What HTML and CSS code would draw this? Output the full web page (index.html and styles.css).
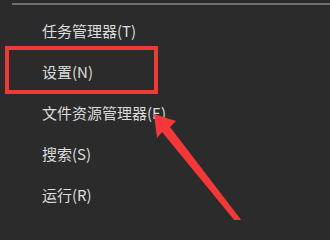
FILE: index.html
```html
<!DOCTYPE html>
<html lang="zh-CN">
<head>
<meta charset="utf-8">
<link rel="stylesheet" href="styles.css">
</head>
<body>
<div class="screen">
  <div class="sep"></div>
  <ul class="menu">
    <li class="item">任务管理器(T)</li>
    <li class="item">设置(N)</li>
    <li class="item">文件资源管理器(E)</li>
    <li class="item">搜索(S)</li>
    <li class="item">运行(R)</li>
  </ul>
  <div class="highlight"></div>
  <svg class="arrow" width="330" height="220" viewBox="0 0 330 220">
    <polygon points="154,114 176,121 170,127 242,221 235,221 162,132 157,138" fill="#f23838"/>
  </svg>
</div>
</body>
</html>
```
FILE: styles.css
```css
html, body {
  margin: 0;
  padding: 0;
  background: #2b2b2b;
}
.screen {
  position: relative;
  width: 330px;
  height: 220px;
  overflow: hidden;
  background: #2b2b2b;
  font-family: "Noto Sans CJK SC", "Noto Sans", sans-serif;
}
.sep {
  margin: 3px 0 0 12px;
  height: 2px;
  background: #6e6e6e;
}
.menu {
  list-style: none;
  margin: 0;
  padding: 5px 0 0 0;
}
.item {
  height: 41px;
  line-height: 41px;
  padding-left: 42px;
  font-size: 15px;
  color: #dcdcdc;
  white-space: nowrap;
}
.highlight {
  position: absolute;
  left: 5px;
  top: 46px;
  width: 145px;
  height: 40px;
  border: 4px solid #f03a3a;
}
.arrow {
  position: absolute;
  left: 0;
  top: 0;
}
```
